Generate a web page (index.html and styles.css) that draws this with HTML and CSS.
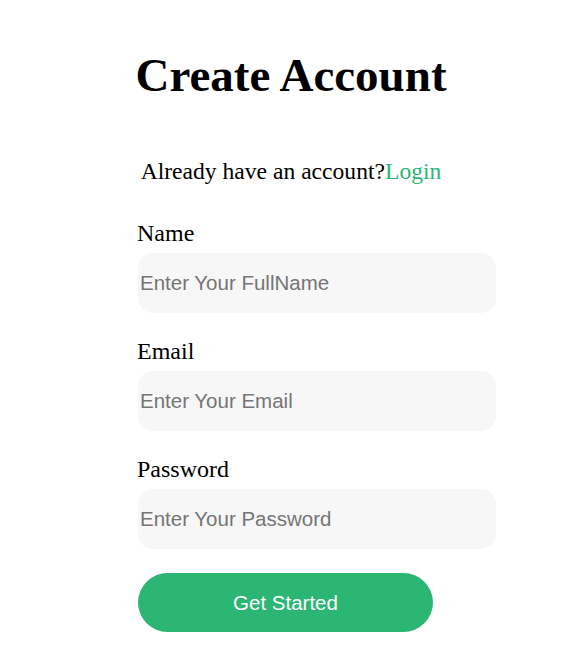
FILE: index.html
```html
<!DOCTYPE html>
<html lang="en">
<head>
<meta charset="utf-8">
<title>Create Account</title>
<link rel="stylesheet" href="styles.css">
</head>
<body>
<main class="page">
  <h1 class="title">Create Account</h1>
  <p class="signin">Already have an account?<a href="#" class="signin-link">Login</a></p>
  <form class="form">
    <label class="field-label" for="name">Name</label>
    <input class="field-input" id="name" type="text" placeholder="Enter Your FullName">
    <label class="field-label" for="email">Email</label>
    <input class="field-input" id="email" type="email" placeholder="Enter Your Email">
    <label class="field-label" for="password">Password</label>
    <input class="field-input" id="password" type="password" placeholder="Enter Your Password">
    <button class="submit" type="button">Get Started</button>
  </form>
</main>
</body>
</html>
```

FILE: styles.css
```css
* { box-sizing: border-box; }
body {
  margin: 8px;
  background: #ffffff;
  font-family: "Liberation Serif", "Times New Roman", serif;
  color: #000;
}
.page {
  display: flex;
  flex-direction: column;
  padding-right: 4px;
}
.title {
  margin: 40px 0 0;
  text-align: center;
  font-size: 47px;
  font-weight: bold;
  line-height: 1.15;
}
.signin {
  margin: 56px 0 0;
  text-align: center;
  font-size: 23.6px;
}
.signin-link {
  color: #2bb673;
  text-decoration: none;
}
.form {
  display: flex;
  flex-direction: column;
  align-items: flex-start;
  margin: 34px 0 0 130px;
  width: 358px;
}
.field-label {
  font-size: 24px;
  line-height: 28px;
  margin-left: -1px;
  margin-bottom: 6px;
}
.field-input {
  width: 358px;
  height: 60px;
  border: 0;
  border-radius: 15px;
  background: #f7f7f7;
  padding: 0 2px;
  font-family: "Liberation Sans", Arial, sans-serif;
  font-size: 20.5px;
  color: #000;
  margin-bottom: 24px;
  outline: none;
}
.field-input::placeholder { color: #757575; }
.submit {
  width: 295px;
  height: 59px;
  border: 0;
  border-radius: 30px;
  background: #2bb673;
  color: #fff;
  font-family: "Liberation Sans", Arial, sans-serif;
  font-size: 20.5px;
  margin-top: 0;
}
```
